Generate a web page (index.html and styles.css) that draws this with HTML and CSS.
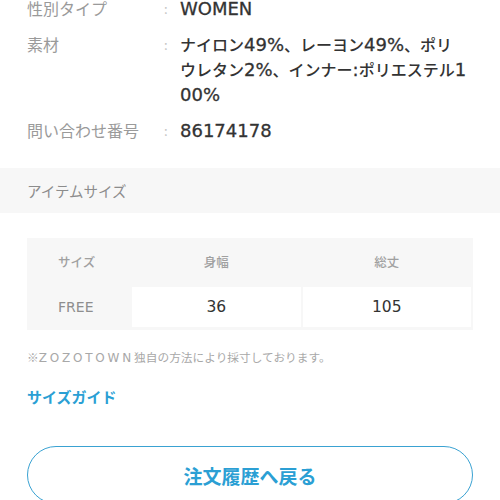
FILE: index.html
```html
<!DOCTYPE html>
<html lang="ja">
<head>
<meta charset="utf-8">
<link rel="stylesheet" href="styles.css">
</head>
<body>
<div class="page">
  <dl class="specs">
    <div class="spec">
      <dt class="label">性別タイプ</dt>
      <dd class="colon">:</dd>
      <dd class="value"><span class="lat">WOMEN</span></dd>
    </div>
    <div class="spec">
      <dt class="label">素材</dt>
      <dd class="colon">:</dd>
      <dd class="value">ナイロン<span class="lat">49%</span>、レーヨン<span class="lat">49%</span>、ポリ<br>ウレタン<span class="lat">2%</span>、インナー<span class="lat">:</span>ポリエステル<span class="lat">1<br>00%</span></dd>
    </div>
    <div class="spec">
      <dt class="label">問い合わせ番号</dt>
      <dd class="colon">:</dd>
      <dd class="value"><span class="lat">86174178</span></dd>
    </div>
  </dl>

  <h2 class="band">アイテムサイズ</h2>

  <div class="size-table">
    <div class="cell head first">サイズ</div>
    <div class="cell head">身幅</div>
    <div class="cell head">総丈</div>
    <div class="cell first size">FREE</div>
    <div class="cell data">36</div>
    <div class="cell data">105</div>
  </div>

  <p class="note">※<span class="brand">ZOZOTOWN</span>独自の方法により採寸しております。</p>
  <a class="guide">サイズガイド</a>

  <button class="back">注文履歴へ戻る</button>
</div>
</body>
</html>
```

FILE: styles.css
```css
html, body {
  margin: 0;
  padding: 0;
  background: #fff;
}
body {
  font-family: "Noto Sans CJK JP", "Noto Sans", sans-serif;
  color: #333;
  width: 500px;
  height: 500px;
  overflow: hidden;
}
.page {
  padding: 0 27px;
  margin-top: -4px;
}
.specs {
  margin: 0;
  display: flex;
  flex-direction: column;
  gap: 11px;
}
.spec {
  display: grid;
  grid-template-columns: 137px 16px 1fr;
  line-height: 25px;
  font-size: 16px;
}
.spec dd {
  margin: 0;
}
.label {
  color: #9a9a9a;
  font-weight: 400;
}
.colon {
  color: #c4c4c4;
  font-size: 13px;
}
.value {
  color: #333;
  font-weight: 500;
}
.lat {
  font-family: "DejaVu Sans", "Noto Sans CJK JP", sans-serif;
  font-size: 18px;
  font-weight: 400;
  -webkit-text-stroke: 0.3px #333;
}
.band {
  margin: 25px -27px 25px;
  background: #f7f7f7;
  height: 45px;
  line-height: 45px;
  padding: 0 27px;
  font-size: 14.5px;
  font-weight: 400;
  color: #8c8c8c;
}
.size-table {
  display: grid;
  grid-template-columns: 103px 1fr 1fr;
  grid-template-rows: 47px 40px;
  gap: 2px;
  padding: 0 2px 3px 0;
  background: #f7f7f7;
}
.cell {
  display: flex;
  align-items: center;
  justify-content: center;
}
.head {
  font-size: 12.5px;
  color: #a0a0a0;
  font-weight: 500;
}
.first {
  justify-content: flex-start;
  padding-left: 31px;
}
.size {
  font-family: "DejaVu Sans", sans-serif;
  font-size: 14px;
  color: #8e8e8e;
}
.data {
  background: #fff;
  font-family: "DejaVu Sans", sans-serif;
  font-size: 15.5px;
  color: #333;
}
.note {
  margin: 17px 0 0;
  font-size: 11.7px;
  line-height: 20px;
  color: #a8a8a8;
}
.brand {
  font-family: "DejaVu Sans", sans-serif;
  font-size: 12px;
  letter-spacing: 2.8px;
}
.guide {
  display: block;
  margin-top: 18px;
  font-size: 15px;
  line-height: 22px;
  font-weight: 700;
  color: #2b9fd4;
}
.back {
  display: block;
  box-sizing: border-box;
  width: 100%;
  height: 58px;
  margin-top: 38px;
  border: 1.5px solid #3aa2d2;
  border-radius: 30px;
  background: #fff;
  font-family: inherit;
  font-size: 19px;
  font-weight: 700;
  color: #2b9fd4;
}
```
